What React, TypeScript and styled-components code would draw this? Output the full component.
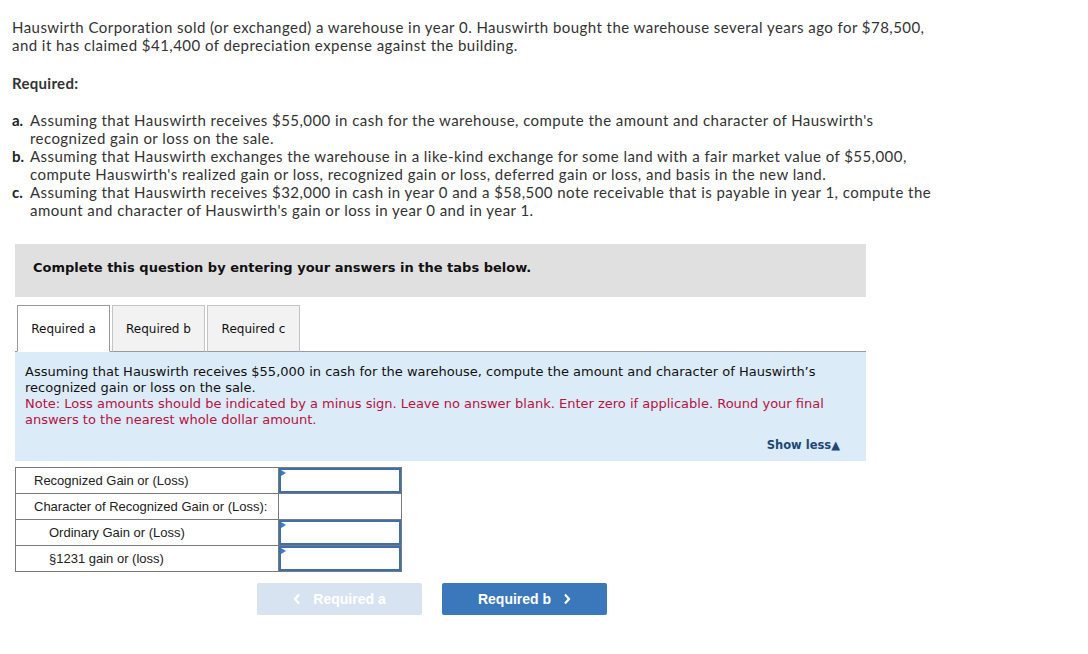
import React, { useState } from "react";
import styled, { createGlobalStyle } from "styled-components";

const GlobalStyle = createGlobalStyle`
  body {
    margin: 0;
    background: #ffffff;
    color: #333333;
    font-family: "Lato", "Open Sans", sans-serif;
  }
`;

const Page = styled.div`
  padding: 18px 0 40px 12px;
  width: 1000px;
`;

const Intro = styled.p`
  margin: 0;
  font-size: 15px;
  line-height: 18px;
  letter-spacing: 0.45px;
`;

const Heading = styled.h4`
  margin: 20px 0 19px;
  font-size: 15px;
  line-height: 18px;
  font-weight: 700;
  letter-spacing: 0.3px;
`;

const List = styled.ol`
  list-style: none;
  margin: 0;
  padding: 0;
`;

const Item = styled.li`
  display: flex;
  font-size: 15px;
  line-height: 18px;
  letter-spacing: 0.45px;
`;

const Letter = styled.span`
  flex: 0 0 18px;
  font-weight: 700;
  letter-spacing: 0;
  color: #222;
`;

const Banner = styled.div`
  margin: 25px 0 0 3px;
  width: 851px;
  height: 53px;
  box-sizing: border-box;
  padding: 0 18px 7px;
  display: flex;
  align-items: center;
  background: #e0e0e0;
  font-family: "DejaVu Sans", Verdana, sans-serif;
  font-size: 13px;
  font-weight: 700;
  color: #111;
`;

const Tabs = styled.div`
  margin: 8px 0 0 3px;
  width: 851px;
  display: flex;
  gap: 2px;
  padding-left: 2px;
  box-sizing: border-box;
  border-bottom: 1px solid #9a9a9a;
`;

const Tab = styled.button<{ $active?: boolean }>`
  width: 93px;
  height: 47px;
  margin-bottom: -1px;
  border: 1px solid ${(p) => (p.$active ? "#9a9a9a" : "#c4c4c4")};
  border-bottom: ${(p) => (p.$active ? "1px solid #ffffff" : "1px solid #9a9a9a")};
  background: ${(p) => (p.$active ? "#ffffff" : "#f2f2f2")};
  font-family: "DejaVu Sans", Verdana, sans-serif;
  font-size: 12px;
  color: #111;
  padding: 0;
  cursor: pointer;
`;

const Panel = styled.div`
  margin-left: 3px;
  width: 851px;
  box-sizing: border-box;
  padding: 12px 10px 8px;
  background: #dcebf8;
  font-family: "DejaVu Sans", Verdana, sans-serif;
  font-size: 13px;
  line-height: 16px;
  color: #111;
`;

const Note = styled.span`
  color: #b8123e;
`;

const ShowLess = styled.div`
  margin-top: 9px;
  padding-right: 16px;
  text-align: right;
  font-size: 11.5px;
  font-weight: 700;
  color: #1d4877;
`;

const Table = styled.table`
  margin: 6px 0 0 3px;
  border-collapse: collapse;
  font-family: "Liberation Sans", Arial, sans-serif;
  font-size: 13px;
  color: #222;
`;

const Label = styled.td<{ $indent?: boolean }>`
  width: 263px;
  height: 26px;
  box-sizing: border-box;
  padding: 0 0 0 ${(p) => (p.$indent ? "33px" : "18px")};
  border: 1px solid #7a7a7a;
`;

const Cell = styled.td`
  width: 122px;
  padding: 0;
  border: 1px solid #7a7a7a;
`;

const InputBox = styled.div`
  position: relative;
  height: 25px;
  box-sizing: border-box;
  border: 2px solid #3f6fab;
  background: #fff;
  &::before {
    content: "";
    position: absolute;
    top: 0;
    left: 0;
    border-left: 5px solid #3f7ac4;
    border-top: 3px solid transparent;
    border-bottom: 3px solid transparent;
  }
`;

const Nav = styled.div`
  margin: 11px 0 0 245px;
  display: flex;
  gap: 20px;
`;

const NavButton = styled.button<{ $disabled?: boolean }>`
  width: 165px;
  height: 32px;
  border: none;
  border-radius: 2px;
  background: ${(p) => (p.$disabled ? "#d7e3f1" : "#3b77bb")};
  color: #ffffff;
  font-family: "Liberation Sans", Arial, sans-serif;
  font-size: 14px;
  font-weight: 700;
  display: flex;
  align-items: center;
  justify-content: center;
  gap: 12px;
  cursor: ${(p) => (p.$disabled ? "default" : "pointer")};
`;

const Chevron = ({ dir }: { dir: "left" | "right" }) => (
  <svg width="8" height="12" viewBox="0 0 8 12">
    <path
      d={dir === "left" ? "M6 1.5 L2 6 L6 10.5" : "M2 1.5 L6 6 L2 10.5"}
      fill="none"
      stroke="#ffffff"
      strokeWidth="2.2"
    />
  </svg>
);

const rows = [
  { label: "Recognized Gain or (Loss)", input: true },
  { label: "Character of Recognized Gain or (Loss):", input: false },
  { label: "Ordinary Gain or (Loss)", input: true, indent: true },
  { label: "§1231 gain or (loss)", input: true, indent: true },
];

const App: React.FC = () => {
  const [tab, setTab] = useState("a");

  return (
    <>
      <GlobalStyle />
      <Page>
        <Intro>
          Hauswirth Corporation sold (or exchanged) a warehouse in year 0. Hauswirth bought the warehouse several years
          ago for $78,500,
          <br />
          and it has claimed $41,400 of depreciation expense against the building.
        </Intro>
        <Heading>Required:</Heading>
        <List>
          <Item>
            <Letter>a.</Letter>
            <span>
              Assuming that Hauswirth receives $55,000 in cash for the warehouse, compute the amount and character of
              Hauswirth's
              <br />
              recognized gain or loss on the sale.
            </span>
          </Item>
          <Item>
            <Letter>b.</Letter>
            <span>
              Assuming that Hauswirth exchanges the warehouse in a like-kind exchange for some land with a fair market
              value of $55,000,
              <br />
              compute Hauswirth's realized gain or loss, recognized gain or loss, deferred gain or loss, and basis in the
              new land.
            </span>
          </Item>
          <Item>
            <Letter>c.</Letter>
            <span>
              Assuming that Hauswirth receives $32,000 in cash in year 0 and a $58,500 note receivable that is payable in
              year 1, compute the
              <br />
              amount and character of Hauswirth's gain or loss in year 0 and in year 1.
            </span>
          </Item>
        </List>

        <Banner>Complete this question by entering your answers in the tabs below.</Banner>

        <Tabs>
          {["a", "b", "c"].map((t) => (
            <Tab key={t} $active={tab === t} onClick={() => setTab(t)}>
              Required {t}
            </Tab>
          ))}
        </Tabs>
        <Panel>
          Assuming that Hauswirth receives $55,000 in cash for the warehouse, compute the amount and character of
          Hauswirth’s
          <br />
          recognized gain or loss on the sale.
          <br />
          <Note>
            Note: Loss amounts should be indicated by a minus sign. Leave no answer blank. Enter zero if applicable.
            Round your final
            <br />
            answers to the nearest whole dollar amount.
          </Note>
          <ShowLess>Show less▲</ShowLess>
        </Panel>

        <Table>
          <tbody>
            {rows.map((r) => (
              <tr key={r.label}>
                <Label $indent={r.indent}>{r.label}</Label>
                <Cell>{r.input && <InputBox />}</Cell>
              </tr>
            ))}
          </tbody>
        </Table>

        <Nav>
          <NavButton $disabled>
            <Chevron dir="left" />
            Required a
          </NavButton>
          <NavButton>
            Required b
            <Chevron dir="right" />
          </NavButton>
        </Nav>
      </Page>
    </>
  );
};

export default App;
